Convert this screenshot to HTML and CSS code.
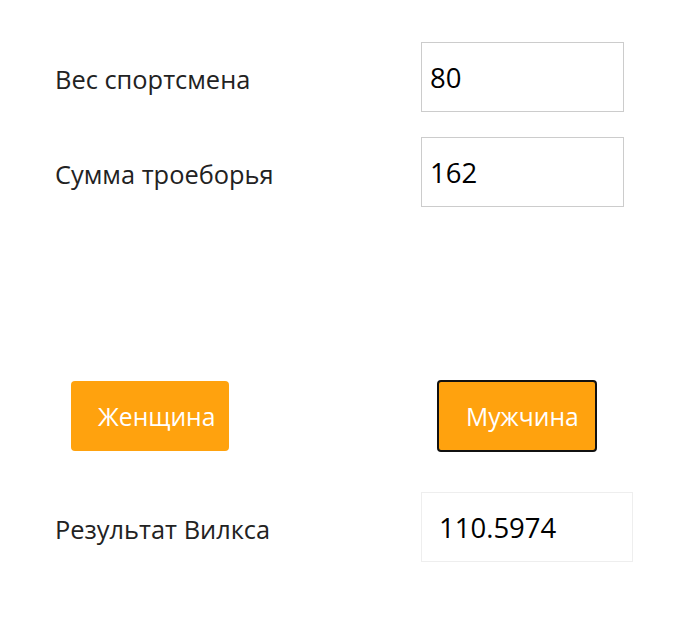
FILE: index.html
```html
<!DOCTYPE html>
<html lang="ru">
<head>
    <meta charset="UTF-8">
    <meta name="viewport" content="width=device-width, initial-scale=1.0">
    <title>Формула Вилкса</title>
    <link rel="stylesheet" href="styles.css">
</head>
<body>
    <main class="calc">
        <div class="row">
            <label for="weight">Вес спортсмена</label>
            <input type="text" id="weight" class="field" value="80">
        </div>

        <div class="row">
            <label for="total">Сумма троеборья</label>
            <input type="text" id="total" class="field" value="162">
        </div>

        <div class="buttons">
            <button class="btn btn-female">Женщина</button>
            <button class="btn btn-male">Мужчина</button>
        </div>

        <div class="row result-row">
            <span class="label">Результат Вилкса</span>
            <div class="result">110.5974</div>
        </div>
    </main>
</body>
</html>
```

FILE: styles.css
```css
* {
    margin: 0;
    padding: 0;
    box-sizing: border-box;
}

body {
    font-family: 'Open Sans', Arial, sans-serif;
    background-color: #ffffff;
    color: #222222;
}

.calc {
    padding: 42px 0 0 55px;
}

.row {
    display: flex;
    align-items: center;
    height: 70px;
    margin-bottom: 25px;
}

.row label,
.row .label {
    width: 366px;
    font-size: 25.4px;
    padding-top: 3px;
}

.field {
    width: 203px;
    height: 70px;
    border: 1px solid #cccccc;
    padding: 0 8px;
    font-family: 'Open Sans', Arial, sans-serif;
    font-size: 27.5px;
    color: #000000;
    outline: none;
    background: #ffffff;
}

.buttons {
    display: flex;
    align-items: center;
    margin-top: 173px;
    padding-left: 16px;
}

.btn {
    height: 70px;
    border: none;
    border-radius: 4px;
    background-color: #ffa20e;
    color: #ffffff;
    font-family: 'Open Sans', Arial, sans-serif;
    font-size: 24.7px;
    text-align: left;
    cursor: pointer;
}

.btn-female {
    width: 158px;
    padding-left: 27px;
}

.btn-male {
    width: 160px;
    height: 72px;
    margin-left: 208px;
    padding-left: 27px;
    border: 2px solid #111111;
}

.result-row {
    margin-top: 40px;
}

.result {
    width: 212px;
    height: 70px;
    border: 1px solid #eeeeee;
    padding: 0 17px;
    display: flex;
    align-items: center;
    font-size: 27.5px;
    color: #000000;
}
```
